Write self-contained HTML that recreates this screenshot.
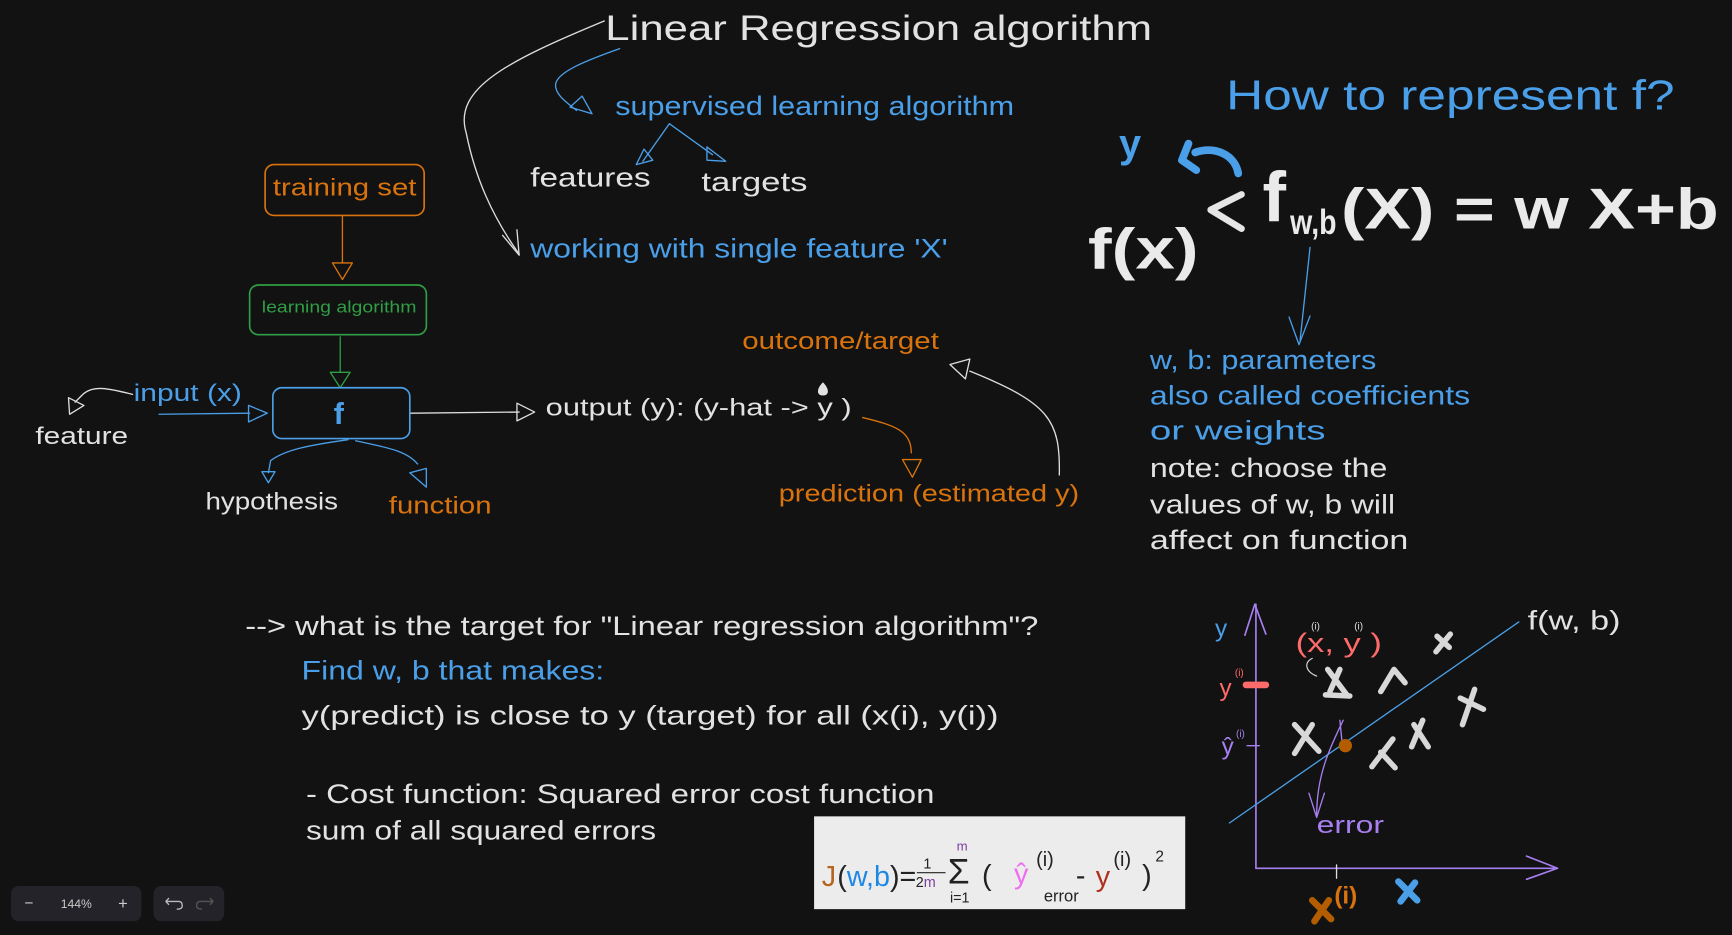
<!DOCTYPE html>
<html><head><meta charset="utf-8"><style>
html,body{margin:0;padding:0;background:#121212;overflow:hidden}
svg{display:block}
text{font-family:"Liberation Sans","DejaVu Sans",sans-serif}
</style></head><body>
<svg width="1732" height="935" viewBox="0 0 1568 846.4" preserveAspectRatio="none" xmlns="http://www.w3.org/2000/svg">
<rect width="1568" height="847" fill="#121212"/>
<g fill="none" stroke-linecap="round" stroke-linejoin="round">
<path d="M547 19 C460 55 410 80 422 120 C430 160 445 195 470 230" stroke="#ddd" stroke-width="1.2"/>
<path d="M455 213 L470 231 L468 208" stroke="#ddd" stroke-width="1.2"/>
<path d="M561 44 C530 55 505 65 503 76 C502 85 512 92 522 100" stroke="#4a9fe8" stroke-width="1.2"/>
<path d="M516 97 L536 103 L527 87 Z" stroke="#4a9fe8" stroke-width="1.2"/>
<path d="M606 112 L582 146" stroke="#4a9fe8" stroke-width="1.2"/>
<path d="M583 135 L576 149 L591 145 Z" stroke="#4a9fe8" stroke-width="1.2"/>
<path d="M606 112 L645 140" stroke="#4a9fe8" stroke-width="1.2"/>
<path d="M640 133 L657 146 L640 145 Z" stroke="#4a9fe8" stroke-width="1.2"/>
<rect x="240" y="149" width="144" height="46" rx="8" stroke="#d9730d" stroke-width="1.5"/>
<path d="M310 196 L310 238" stroke="#d9730d" stroke-width="1.2"/>
<path d="M301 238 L319 238 L310 253 Z" stroke="#d9730d" stroke-width="1.2"/>
<rect x="226" y="258" width="160" height="45" rx="8" stroke="#2f9e44" stroke-width="1.5"/>
<path d="M308 305 L308 337" stroke="#2f9e44" stroke-width="1.2"/>
<path d="M299 337 L317 337 L308 351 Z" stroke="#2f9e44" stroke-width="1.2"/>
<rect x="247" y="351" width="124" height="46" rx="8" stroke="#4a9fe8" stroke-width="1.5"/>
<path d="M144 375 L226 374" stroke="#4a9fe8" stroke-width="1.2"/>
<path d="M225 367 L242 374 L225 382 Z" stroke="#4a9fe8" stroke-width="1.2"/>
<path d="M120 357 C100 352 85 348 75 357 L68 364" stroke="#ddd" stroke-width="1.2"/>
<path d="M62 360 L63 375 L76 367 Z" stroke="#ddd" stroke-width="1.2"/>
<path d="M372 374 L470 373" stroke="#ddd" stroke-width="1.2"/>
<path d="M468 365 L484 373 L468 381 Z" stroke="#ddd" stroke-width="1.2"/>
<path d="M315 398 C280 403 258 407 245 417 L243 428" stroke="#4a9fe8" stroke-width="1.2"/>
<path d="M237 427 L249 427 L243 437 Z" stroke="#4a9fe8" stroke-width="1.2"/>
<path d="M322 399 C350 405 368 408 378 420" stroke="#4a9fe8" stroke-width="1.2"/>
<path d="M371 428 L386 424 L386 441 Z" stroke="#4a9fe8" stroke-width="1.2"/>
<path d="M781 378 C810 385 825 390 825 410" stroke="#d9730d" stroke-width="1.2"/>
<path d="M817 416 L834 416 L826 432 Z" stroke="#d9730d" stroke-width="1.2"/>
<path d="M959 430 C960 380 950 365 878 336" stroke="#ddd" stroke-width="1.2"/>
<path d="M860 330 L878 325 L874 343 Z" stroke="#ddd" stroke-width="1.2"/>
<path d="M1186 224 L1177 308" stroke="#4a9fe8" stroke-width="1.2"/>
<path d="M1167 287 L1176 312 L1186 286" stroke="#4a9fe8" stroke-width="1.2"/>
<path d="M1121 157 C1118 140 1100 132 1082 138" stroke="#4a9fe8" stroke-width="7"/>
<path d="M1076 130 L1070 145 L1083 154" stroke="#4a9fe8" stroke-width="7"/>
<path d="M1124 176 L1096 190 L1124 207" stroke="#e6e6e6" stroke-width="6"/>
<path d="M1137 786 L1137 547" stroke="#a77ff0" stroke-width="1.5"/>
<path d="M1127 575 L1136 547 L1146 574" stroke="#a77ff0" stroke-width="1.5"/>
<path d="M1137 786 L1410 786" stroke="#a77ff0" stroke-width="1.5"/>
<path d="M1382 775 L1410 786 L1382 796" stroke="#a77ff0" stroke-width="1.5"/>
<path d="M1113 745 L1375 563" stroke="#4a9fe8" stroke-width="1.2"/>
<path d="M1128 620 L1146 620" stroke="#ff6b6b" stroke-width="6"/>
<path d="M1129 675 L1140 675" stroke="#a77ff0" stroke-width="1.2"/>
<path d="M1210 783 L1210 795" stroke="#ddd" stroke-width="1.2"/>
<path d="M1213 652 L1215 672" stroke="#a77ff0" stroke-width="1.2"/>
<path d="M1216 652 C1205 675 1192 700 1192 738" stroke="#a77ff0" stroke-width="1.2"/>
<path d="M1185 718 L1192 740 L1199 718" stroke="#a77ff0" stroke-width="1.2"/>
<path d="M1188 596 C1180 600 1182 608 1192 612" stroke="#ddd" stroke-width="1"/>
<g stroke="#d8d8d8" stroke-width="5">
<path d="M1202 606 L1220 630 M1213 606 L1204 626 M1200 629 L1222 630"/>
<path d="M1172 656 L1194 680 M1188 656 L1172 682"/>
<path d="M1250 681 L1263 695 M1261 669 L1242 694"/>
<path d="M1280 656 L1293 676 M1288 652 L1278 676"/>
<path d="M1322 632 L1343 642 M1335 624 L1324 656"/>
<path d="M1301 576 L1312 586 M1313 574 L1300 590"/>
<path d="M1250 626 L1262 606 L1272 618"/>
</g>
<path d="M1266 798 L1283 815 M1281 799 L1268 816" stroke="#4a9fe8" stroke-width="6"/>
<path d="M1188 815 L1205 832 M1203 815 L1190 834" stroke="#b35c00" stroke-width="6"/>
</g>
<circle cx="1218" cy="675" r="6" fill="#b35c00"/>
<g fill="#e2e2e2">
<text x="548" y="36" font-size="32" textLength="495" lengthAdjust="spacingAndGlyphs">Linear Regression algorithm</text>
<text x="480" y="169" font-size="24" textLength="109" lengthAdjust="spacingAndGlyphs">features</text>
<text x="635" y="173" font-size="24" textLength="96" lengthAdjust="spacingAndGlyphs">targets</text>
<text x="32" y="402" font-size="22" textLength="84" lengthAdjust="spacingAndGlyphs">feature</text>
<text x="186" y="461" font-size="22" textLength="120" lengthAdjust="spacingAndGlyphs">hypothesis</text>
<text x="494" y="376" font-size="22" textLength="277" lengthAdjust="spacingAndGlyphs">output (y): (y-hat -&gt; y )</text>
<text x="1041" y="432" font-size="24" textLength="215" lengthAdjust="spacingAndGlyphs">note: choose the</text>
<text x="1041" y="465" font-size="24" textLength="222" lengthAdjust="spacingAndGlyphs">values of w, b will</text>
<text x="1041" y="497" font-size="24" textLength="234" lengthAdjust="spacingAndGlyphs">affect on function</text>
<text x="222" y="575" font-size="24" textLength="718" lengthAdjust="spacingAndGlyphs">--&gt; what is the target for "Linear regression algorithm"?</text>
<text x="273" y="656" font-size="24" textLength="631" lengthAdjust="spacingAndGlyphs">y(predict) is close to y (target) for all (x(i), y(i))</text>
<text x="277" y="727" font-size="24" textLength="569" lengthAdjust="spacingAndGlyphs">- Cost function: Squared error cost function</text>
<text x="277" y="760" font-size="24" textLength="317" lengthAdjust="spacingAndGlyphs">sum of all squared errors</text>
<text x="1383" y="570" font-size="24" textLength="84" lengthAdjust="spacingAndGlyphs">f(w, b)</text>
</g>
<path d="M745 346 C739 352 739 358 745 358 C751 358 751 352 745 346 Z" fill="#e2e2e2"/>
<g fill="#eaeaea" font-weight="bold">
<text x="985" y="243" font-size="52" textLength="100" lengthAdjust="spacingAndGlyphs">f(x)</text>
<text x="1143" y="200" font-size="64">f</text>
<text x="1168" y="212" font-size="32" textLength="42" lengthAdjust="spacingAndGlyphs">w,b</text>
<text x="1214" y="207" font-size="52" textLength="342" lengthAdjust="spacingAndGlyphs">(X) = w X+b</text>
</g>
<text x="1013" y="142" font-size="36" font-weight="bold" fill="#4a9fe8">y</text>
<g fill="#4a9fe8">
<text x="557" y="104" font-size="24" textLength="361" lengthAdjust="spacingAndGlyphs">supervised learning algorithm</text>
<text x="480" y="233" font-size="24" textLength="378" lengthAdjust="spacingAndGlyphs">working with single feature 'X'</text>
<text x="1110" y="99" font-size="38" textLength="406" lengthAdjust="spacingAndGlyphs">How to represent f?</text>
<text x="121" y="363" font-size="22" textLength="98" lengthAdjust="spacingAndGlyphs">input (x)</text>
<text x="302" y="384" font-size="28" font-weight="bold">f</text>
<text x="1041" y="334" font-size="24" textLength="205" lengthAdjust="spacingAndGlyphs">w, b: parameters</text>
<text x="1041" y="366" font-size="24" textLength="290" lengthAdjust="spacingAndGlyphs">also called coefficients</text>
<text x="1041" y="398" font-size="24" textLength="159" lengthAdjust="spacingAndGlyphs">or weights</text>
<text x="273" y="615" font-size="24" textLength="274" lengthAdjust="spacingAndGlyphs">Find w, b that makes:</text>
<text x="1100" y="576" font-size="22">y</text>
</g>
<g fill="#d9730d">
<text x="247" y="177" font-size="22" textLength="130" lengthAdjust="spacingAndGlyphs">training set</text>
<text x="352" y="465" font-size="22" textLength="93" lengthAdjust="spacingAndGlyphs">function</text>
<text x="672" y="316" font-size="22" textLength="178" lengthAdjust="spacingAndGlyphs">outcome/target</text>
<text x="705" y="454" font-size="22" textLength="272" lengthAdjust="spacingAndGlyphs">prediction (estimated y)</text>
<text x="1208" y="818" font-size="22" font-weight="bold">(i)</text>
</g>
<text x="237" y="283" font-size="15" fill="#2f9e44" textLength="140" lengthAdjust="spacingAndGlyphs">learning algorithm</text>
<g fill="#ff6b6b">
<text x="1173" y="590" font-size="24" textLength="78" lengthAdjust="spacingAndGlyphs">(x, y )</text>
<text x="1104" y="630" font-size="22">y</text>
<text x="1118" y="612" font-size="9">(i)</text>
</g>
<g fill="#ddd" font-size="9"><text x="1187" y="570">(i)</text><text x="1226" y="570">(i)</text></g>
<g fill="#a77ff0">
<text x="1106" y="683" font-size="22">ŷ</text>
<text x="1119" y="667" font-size="9">(i)</text>
<text x="1192" y="754" font-size="22" textLength="61" lengthAdjust="spacingAndGlyphs">error</text>
</g>
<rect x="737" y="739" width="336" height="84" fill="#ececec"/>
<g font-size="26">
<text x="744" y="802" fill="#b5651d">J</text>
<text x="758" y="802" fill="#222">(<tspan fill="#1e88e5">w,b</tspan>)=</text>
<text x="836" y="786" font-size="13" fill="#222">1</text>
<line x1="830" y1="790" x2="856" y2="790" stroke="#222" stroke-width="1"/>
<text x="829" y="803" font-size="13" fill="#222">2<tspan fill="#7b3fa0">m</tspan></text>
<text x="858" y="800" font-size="32" fill="#222">Σ</text>
<text x="866" y="770" font-size="12" fill="#7b3fa0">m</text>
<text x="860" y="817" font-size="13" fill="#222">i=1</text>
<text x="889" y="801" fill="#222">(</text>
<text x="918" y="800" fill="#f06ef0">ŷ</text>
<text x="938" y="784" font-size="18" fill="#222">(i)</text>
<text x="974" y="801" fill="#222">-</text>
<text x="992" y="802" fill="#b03020">y</text>
<text x="1008" y="784" font-size="18" fill="#222">(i)</text>
<text x="1034" y="801" fill="#222">)</text>
<text x="1046" y="780" font-size="14" fill="#222">2</text>
<text x="945" y="816" font-size="15" fill="#222">error</text>
</g>
<rect x="10" y="802" width="118" height="32" rx="7" fill="#232329"/>
<rect x="139" y="802" width="64" height="32" rx="7" fill="#232329"/>
<g fill="#ccc" font-size="11">
<text x="22" y="822" font-size="14">−</text>
<text x="55" y="822">144%</text>
<text x="107" y="823" font-size="15">+</text>
</g>
<path d="M150 816 L162 816 Q165 816 165 820 Q165 823 160 823 M150 816 L153 813 M150 816 L153 819" stroke="#bbb" stroke-width="1.2" fill="none"/>
<path d="M193 816 L181 816 Q178 816 178 820 Q178 823 183 823 M193 816 L190 813 M193 816 L190 819" stroke="#555" stroke-width="1.2" fill="none"/>
</svg>
</body></html>
